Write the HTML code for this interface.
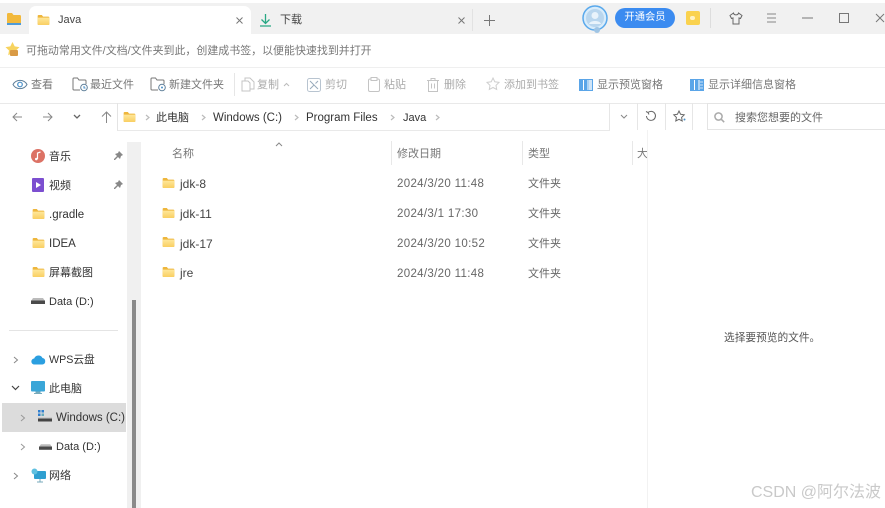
<!DOCTYPE html>
<html lang="zh">
<head>
<meta charset="utf-8">
<style>
html,body{margin:0;padding:0;background:#fff}
body{width:885px;height:508px;overflow:hidden;position:relative;font-family:"Liberation Sans","Noto Sans CJK SC",sans-serif;font-size:11px;color:#333;filter:blur(.3px)}
.t{position:absolute;white-space:nowrap;line-height:14px}
.b{position:absolute}
svg{position:absolute;overflow:visible}
.g{color:#ababab;font-size:11px}
.m{color:#777;font-size:11px}
.f{font-size:12px;color:#444}
.h{color:#777;font-size:11px}
.d{color:#666;font-size:11.500px}
.n{letter-spacing:.33px}
.l{font-size:11.500px}
</style>
</head>
<body>
<svg width="0" height="0" style="position:absolute"><defs>
<linearGradient id="fg" x1="0" y1="0" x2="0" y2="1"><stop offset="0" stop-color="#fee79a"/><stop offset="1" stop-color="#f9cf62"/></linearGradient>
<symbol id="folder" viewBox="0 0 14 12"><path d="M0 1.200C0 .5.500 0 1.200 0H5l1.500 2h6.300c.7 0 1.200.5 1.200 1.200V11c0 .6-.5 1-1.200 1H1.200C.5 12 0 11.600 0 11z" fill="#eeb63c"/><path d="M0 3.200h14V11c0 .6-.5 1-1.200 1H1.200C.5 12 0 11.600 0 11z" fill="url(#fg)"/></symbol>
<symbol id="drive" viewBox="0 0 14 6"><path d="M2 0h10l2 3H0z" fill="#bbb"/><rect y="2.500" width="14" height="3.500" fill="#4a4a4a"/></symbol>
</defs></svg>

<!-- tab strip -->
<div class="b" style="left:0;top:3px;width:885px;height:31px;background:#f1f1f1"></div>
<div class="b" style="left:29px;top:6px;width:222px;height:28px;background:#fff;border-radius:7px 7px 0 0"></div>
<svg style="left:7px;top:13px" width="14" height="12"><path d="M0 1.200C0 .5.500 0 1.200 0H5l1.500 2h6.300c.7 0 1.200.5 1.200 1.200V11c0 .6-.5 1-1.200 1H1.200C.5 12 0 11.600 0 11z" fill="#f2b93c"/><rect y="10" width="14" height="2" fill="#4f9bd8"/></svg>
<svg style="left:37px;top:15px" width="13" height="10"><use href="#folder" width="13" height="10"/></svg>
<div class="t" style="left:58px;top:13px;color:#444">Java</div>
<svg style="left:236px;top:17px" width="7" height="7"><path d="M.5.500l6 6M6.500.500l-6 6" stroke="#777" stroke-width="1"/></svg>
<svg style="left:259px;top:13px" width="13" height="14"><path d="M6.500 1v9M2.500 6.500l4 4 4-4M1 13h11" stroke="#28a884" stroke-width="1.300" fill="none"/></svg>
<div class="t" style="left:280px;top:13px;color:#444">下载</div>
<svg style="left:458px;top:17px" width="7" height="7"><path d="M.5.500l6 6M6.500.500l-6 6" stroke="#777" stroke-width="1"/></svg>
<div class="b" style="left:472px;top:9px;width:1px;height:22px;background:#e2e2e2"></div>
<svg style="left:484px;top:15px" width="11" height="11"><path d="M5.500 0v11M0 5.500h11" stroke="#777" stroke-width="1"/></svg>

<svg style="left:582px;top:5px" width="26" height="28"><circle cx="13" cy="13" r="12" fill="#d8ecfb" stroke="#5aa9ec" stroke-width="1.500"/><circle cx="13" cy="13" r="9" fill="#b9d6ee"/><circle cx="13" cy="10.500" r="3.500" fill="#e9f3fb"/><path d="M7 19c1-4 11-4 12 0z" fill="#e9f3fb"/><circle cx="15" cy="25" r="3" fill="#9fc4e4"/></svg>
<div class="t" style="left:615px;top:8px;width:60px;height:20px;line-height:20px;background:#3b8bf0;color:#fff;border-radius:10px;text-align:center;font-size:10.300px">开通会员</div>
<div class="b" style="left:686px;top:11px;width:14px;height:14px;background:#fad24e;border-radius:2px"></div>
<div class="b" style="left:690px;top:16px;width:5px;height:4px;background:#fff3c4;border-radius:2px"></div>
<div class="b" style="left:710px;top:8px;width:1px;height:20px;background:#ddd"></div>
<svg style="left:729px;top:12px" width="14" height="13"><path d="M4.500 1L1 3.500l1.500 3L4 6v6h6V6l1.500.5 1.500-3L9.500 1C9 3.500 5 3.500 4.500 1z" fill="none" stroke="#666" stroke-width="1"/></svg>
<svg style="left:766px;top:13px" width="11" height="10"><path d="M1 1h9M1 5h9M1 9h9" stroke="#888" stroke-width="1"/></svg>
<svg style="left:802px;top:17px" width="11" height="2"><path d="M0 1h11" stroke="#777" stroke-width="1"/></svg>
<div class="b" style="left:839px;top:13px;width:8px;height:8px;border:1px solid #777"></div>
<svg style="left:875px;top:13px" width="10" height="10"><path d="M1 1l8 8M9 1l-8 8" stroke="#777" stroke-width="1"/></svg>

<!-- bookmark bar -->
<svg style="left:5px;top:42px" width="15" height="15"><path d="M7.500 0l2.200 4.400 4.800.7-3.500 3.400.8 4.800-4.300-2.300-4.300 2.300.8-4.800L.5 5.100l4.800-.7z" fill="#f7d35f"/><rect x="5" y="8" width="8" height="6" rx="1" fill="#d99a45"/></svg>
<div class="t m" style="left:26px;top:44px;font-size:10.960px">可拖动常用文件/文档/文件夹到此，创建成书签，以便能快速找到并打开</div>
<div class="b" style="left:0;top:67px;width:885px;height:1px;background:#efefef"></div>

<!-- toolbar -->
<svg style="left:12px;top:79px" width="16" height="11"><path d="M1 5.500C4 0 12 0 15 5.500 12 11 4 11 1 5.500z" fill="none" stroke="#5f7f99" stroke-width="1"/><circle cx="8" cy="5.500" r="2.300" fill="none" stroke="#4a90c8" stroke-width="1.200"/></svg>
<div class="t m" style="left:31px;top:78px">查看</div>
<svg style="left:72px;top:77px" width="17" height="15"><path d="M8 13H2c-.6 0-1-.4-1-1V2c0-.6.400-1 1-1h3.500l1.500 2h6c.6 0 1 .4 1 1v3" fill="none" stroke="#777" stroke-width="1"/><circle cx="12" cy="10.500" r="3.300" fill="#fff" stroke="#5f7f99"/><path d="M12 9v2h1.500" stroke="#4a90c8" fill="none"/></svg>
<div class="t m" style="left:90px;top:78px">最近文件</div>
<svg style="left:150px;top:77px" width="17" height="15"><path d="M8 13H2c-.6 0-1-.4-1-1V2c0-.6.400-1 1-1h3.500l1.500 2h6c.6 0 1 .4 1 1v3" fill="none" stroke="#777" stroke-width="1"/><circle cx="12" cy="10.500" r="3.300" fill="#fff" stroke="#5f7f99"/><circle cx="12" cy="10.500" r="1" fill="#4a90c8"/></svg>
<div class="t m" style="left:169px;top:78px">新建文件夹</div>
<div class="b" style="left:234px;top:73px;width:1px;height:23px;background:#e6e6e6"></div>
<svg style="left:241px;top:77px" width="14" height="15"><path d="M4 4V1h5l4 4v7H9M1 4h6l2 2v8H1z" fill="none" stroke="#c4c4c4"/></svg>
<div class="t g" style="left:257px;top:78px">复制</div>
<svg style="left:283px;top:82px" width="7" height="5"><path d="M1 4l2.500-2.500L6 4" fill="none" stroke="#bbb"/></svg>
<svg style="left:307px;top:78px" width="14" height="14"><rect x=".5" y=".5" width="13" height="13" rx="2" fill="none" stroke="#b8c4d0"/><path d="M3 3l8 8M3 11l4-4M11 3L8.500 5.500" stroke="#9ab" fill="none"/></svg>
<div class="t g" style="left:325px;top:78px">剪切</div>
<svg style="left:368px;top:77px" width="12" height="15"><rect x=".5" y="2" width="11" height="12.500" rx="1.500" fill="none" stroke="#c4c4c4"/><rect x="3" y=".5" width="6" height="3" fill="#fff" stroke="#c4c4c4"/></svg>
<div class="t g" style="left:384px;top:78px">粘贴</div>
<svg style="left:427px;top:78px" width="12" height="14"><path d="M0 2.500h12M4 2.500V.5h4v2M1.500 2.500v11h9v-11M4.500 5.500v5M7.500 5.500v5" fill="none" stroke="#c4c4c4"/></svg>
<div class="t g" style="left:444px;top:78px">删除</div>
<svg style="left:486px;top:77px" width="14" height="14"><path d="M7 1l1.800 3.800 4.200.6-3 3 .7 4.100L7 10.500l-3.700 2 .7-4.100-3-3 4.200-.6z" fill="none" stroke="#cfcfcf"/></svg>
<div class="t g" style="left:504px;top:78px">添加到书签</div>
<svg style="left:579px;top:79px" width="14" height="12"><rect width="14" height="12" fill="#5aa5e8"/><path d="M4.500 1v10M9 1v10" stroke="#fff"/><rect x="10" y="1" width="3" height="10" fill="#cfe4f7"/></svg>
<div class="t m" style="left:597px;top:78px">显示预览窗格</div>
<svg style="left:690px;top:79px" width="14" height="12"><rect width="14" height="12" fill="#5aa5e8"/><path d="M4.500 1v10M9 1v10" stroke="#fff"/><path d="M10 3h3M10 6h3M10 9h3" stroke="#cfe4f7"/></svg>
<div class="t m" style="left:708px;top:78px">显示详细信息窗格</div>
<div class="b" style="left:0;top:103px;width:885px;height:1px;background:#e9e9e9"></div>

<!-- nav -->
<svg style="left:12px;top:112px" width="11" height="10"><path d="M10 5H1M5 1L1 5l4 4" fill="none" stroke="#888"/></svg>
<svg style="left:42px;top:112px" width="11" height="10"><path d="M1 5h9M6 1l4 4-4 4" fill="none" stroke="#888"/></svg>
<svg style="left:73px;top:114px" width="8" height="6"><path d="M1 1l3 3 3-3" fill="none" stroke="#666" stroke-width="1.300"/></svg>
<svg style="left:101px;top:111px" width="11" height="12"><path d="M5.500 12V1M1 5.500L5.500 1 10 5.500" fill="none" stroke="#888"/></svg>

<!-- address bar -->
<div class="b" style="left:117px;top:103px;width:492px;height:27px;border-left:1px solid #e4e4e4;border-bottom:1px solid #e9e9e9"></div>
<svg style="left:123px;top:112px" width="13" height="10"><use href="#folder" width="13" height="10"/></svg>
<svg style="left:145px;top:114px" width="5" height="7"><path d="M1 1l3 2.500L1 6" fill="none" stroke="#bbb" stroke-width="1.200"/></svg>
<div class="t" style="left:156px;top:111px;color:#333">此电脑</div>
<svg style="left:201px;top:114px" width="5" height="7"><path d="M1 1l3 2.500L1 6" fill="none" stroke="#bbb" stroke-width="1.200"/></svg>
<div class="t l" style="left:213px;top:111px;color:#333">Windows (C:)</div>
<svg style="left:294px;top:114px" width="5" height="7"><path d="M1 1l3 2.500L1 6" fill="none" stroke="#bbb" stroke-width="1.200"/></svg>
<div class="t l" style="left:306px;top:111px;color:#333">Program Files</div>
<svg style="left:390px;top:114px" width="5" height="7"><path d="M1 1l3 2.500L1 6" fill="none" stroke="#bbb" stroke-width="1.200"/></svg>
<div class="t" style="left:403px;top:111px;color:#333">Java</div>
<svg style="left:435px;top:114px" width="5" height="7"><path d="M1 1l3 2.500L1 6" fill="none" stroke="#bbb" stroke-width="1.200"/></svg>

<div class="b" style="left:609px;top:103px;width:1px;height:27px;background:#e6e6e6"></div>
<svg style="left:620px;top:114px" width="8" height="6"><path d="M1 1l3 3 3-3" fill="none" stroke="#888"/></svg>
<div class="b" style="left:637px;top:103px;width:1px;height:27px;background:#e6e6e6"></div>
<svg style="left:645px;top:110px" width="12" height="12"><path d="M3 2.500A4.500 4.500 0 1 1 1.500 6M1 1.500l2 1 1 2" fill="none" stroke="#666"/></svg>
<div class="b" style="left:665px;top:103px;width:1px;height:27px;background:#e6e6e6"></div>
<svg style="left:673px;top:110px" width="14" height="13"><path d="M6 1l1.600 3.300 3.600.5-2.600 2.600.6 3.600L6 9.300 2.800 11l.6-3.600L.8 4.800l3.600-.5z" fill="none" stroke="#666"/><circle cx="11.500" cy="9.500" r="1" fill="#4a90c8"/></svg>
<div class="b" style="left:692px;top:103px;width:1px;height:27px;background:#e6e6e6"></div>
<div class="b" style="left:707px;top:103px;width:178px;height:27px;border:1px solid #e4e4e4;border-right:0;box-sizing:border-box"></div>
<svg style="left:714px;top:112px" width="11" height="11"><circle cx="4.500" cy="4.500" r="3.600" fill="none" stroke="#aaa" stroke-width="1.500"/><path d="M7.200 7.200l3 3" stroke="#aaa" stroke-width="1.500"/></svg>
<div class="t m" style="left:735px;top:111px;color:#666">搜索您想要的文件</div>

<!-- sidebar -->
<div class="b" style="left:127px;top:142px;width:14px;height:366px;background:#f0f0f0"></div>
<div class="b" style="left:132px;top:300px;width:4px;height:208px;background:#8a8a8a"></div>

<svg style="left:31px;top:149px" width="14" height="14"><circle cx="7" cy="7" r="7" fill="#dc7265"/><path d="M6.500 10V4l3-1" fill="none" stroke="#fff" stroke-width="1.200"/><circle cx="5.300" cy="10" r="1.300" fill="#fff"/></svg>
<div class="t" style="left:49px;top:150px">音乐</div>
<svg style="left:113px;top:151px" width="10" height="10"><path d="M6 0l4 4-2 1-1 3-2-2-3 3-1 0 0-1 3-3-2-2 3-1z" fill="#888"/></svg>
<svg style="left:32px;top:178px" width="12" height="14"><rect width="12" height="14" rx="1" fill="#7c4fd0"/><path d="M4 4l5 3-5 3z" fill="#fff"/></svg>
<div class="t" style="left:49px;top:179px">视频</div>
<svg style="left:113px;top:180px" width="10" height="10"><path d="M6 0l4 4-2 1-1 3-2-2-3 3-1 0 0-1 3-3-2-2 3-1z" fill="#888"/></svg>
<svg style="left:32px;top:209px" width="13" height="10"><use href="#folder" width="13" height="10"/></svg>
<div class="t l" style="left:49px;top:208px">.gradle</div>
<svg style="left:32px;top:238px" width="13" height="10"><use href="#folder" width="13" height="10"/></svg>
<div class="t l" style="left:49px;top:237px">IDEA</div>
<svg style="left:32px;top:267px" width="13" height="10"><use href="#folder" width="13" height="10"/></svg>
<div class="t" style="left:49px;top:266px">屏幕截图</div>
<svg style="left:31px;top:298px" width="14" height="6"><use href="#drive" width="14" height="6"/></svg>
<div class="t" style="left:49px;top:295px">Data (D:)</div>

<div class="b" style="left:9px;top:330px;width:109px;height:1px;background:#e4e4e4"></div>

<svg style="left:13px;top:356px" width="6" height="8"><path d="M1 1l3.500 3L1 7" fill="none" stroke="#888"/></svg>
<svg style="left:31px;top:353px" width="15" height="12"><path d="M3.500 11.500a3 3 0 0 1-.3-6A4.500 4.500 0 0 1 11.500 5a3.300 3.300 0 0 1 0 6.500z" fill="#2b9fe0"/></svg>
<div class="t" style="left:49px;top:353px;font-size:10.700px">WPS云盘</div>
<svg style="left:11px;top:385px" width="9" height="6"><path d="M1 1l3.500 3.500L8 1" fill="none" stroke="#444" stroke-width="1.200"/></svg>
<svg style="left:31px;top:381px" width="14" height="14"><rect width="14" height="10.500" rx="1" fill="#3aa6d8"/><rect x="4.500" y="10.500" width="5" height="1.500" fill="#7ab"/><rect x="3" y="12" width="8" height="1" fill="#7ab"/></svg>
<div class="t" style="left:49px;top:382px">此电脑</div>
<div class="b" style="left:2px;top:403px;width:124px;height:29px;background:#dcdcdc"></div>
<svg style="left:20px;top:414px" width="6" height="8"><path d="M1 1l3.500 3L1 7" fill="none" stroke="#999"/></svg>
<svg style="left:38px;top:410px" width="14" height="13"><rect width="2.500" height="2.500" fill="#2f7fd0"/><rect x="3.500" width="2.500" height="2.500" fill="#2f7fd0"/><rect y="3.500" width="2.500" height="2.500" fill="#2f7fd0"/><rect x="3.500" y="3.500" width="2.500" height="2.500" fill="#6ab"/><rect y="7" width="14" height="2" fill="#ccc"/><rect y="8.500" width="14" height="3" fill="#444"/></svg>
<div class="t l" style="left:56px;top:411px">Windows (C:)</div>
<svg style="left:20px;top:443px" width="6" height="8"><path d="M1 1l3.500 3L1 7" fill="none" stroke="#999"/></svg>
<svg style="left:39px;top:444px" width="13" height="6"><use href="#drive" width="13" height="6"/></svg>
<div class="t" style="left:56px;top:440px">Data (D:)</div>
<svg style="left:13px;top:472px" width="6" height="8"><path d="M1 1l3.500 3L1 7" fill="none" stroke="#888"/></svg>
<svg style="left:31px;top:468px" width="15" height="15"><rect x="3" y="3" width="12" height="8" rx="1" fill="#2f9fd0"/><circle cx="3.500" cy="3.500" r="3" fill="#5fc0e0"/><path d="M9 11v3M6 14h6" stroke="#7ab"/></svg>
<div class="t" style="left:49px;top:469px">网络</div>

<!-- file list -->
<svg style="left:275px;top:142px" width="8" height="5"><path d="M1 4l3-3 3 3" fill="none" stroke="#888"/></svg>
<div class="t h" style="left:172px;top:147px">名称</div>
<div class="b" style="left:391px;top:141px;width:1px;height:24px;background:#e8e8e8"></div>
<div class="t h" style="left:397px;top:147px">修改日期</div>
<div class="b" style="left:522px;top:141px;width:1px;height:24px;background:#e8e8e8"></div>
<div class="t h" style="left:528px;top:147px">类型</div>
<div class="b" style="left:632px;top:141px;width:1px;height:24px;background:#e8e8e8"></div>
<div class="t h" style="left:637px;top:147px">大</div>
<div class="b" style="left:647px;top:130px;width:1px;height:378px;background:#f2f2f2"></div>

<svg style="left:162px;top:178px" width="13" height="10"><use href="#folder" width="13" height="10"/></svg>
<div class="t f" style="left:180px;top:177px">jdk-8</div>
<div class="t d n" style="left:397px;top:177px">2024/3/20 11:48</div>
<div class="t d" style="left:528px;top:177px;font-size:11px">文件夹</div>

<svg style="left:162px;top:208px" width="13" height="10"><use href="#folder" width="13" height="10"/></svg>
<div class="t f" style="left:180px;top:207px">jdk-11</div>
<div class="t d n" style="left:397px;top:207px">2024/3/1 17:30</div>
<div class="t d" style="left:528px;top:207px;font-size:11px">文件夹</div>

<svg style="left:162px;top:237px" width="13" height="10"><use href="#folder" width="13" height="10"/></svg>
<div class="t f" style="left:180px;top:237px">jdk-17</div>
<div class="t d n" style="left:397px;top:237px">2024/3/20 10:52</div>
<div class="t d" style="left:528px;top:237px;font-size:11px">文件夹</div>

<svg style="left:162px;top:267px" width="13" height="10"><use href="#folder" width="13" height="10"/></svg>
<div class="t f" style="left:180px;top:266px">jre</div>
<div class="t d n" style="left:397px;top:267px">2024/3/20 11:48</div>
<div class="t d" style="left:528px;top:267px;font-size:11px">文件夹</div>

<div class="t" style="left:724px;top:331px;color:#555;font-size:10.700px">选择要预览的文件。</div>
<div class="t" style="left:751px;top:484px;font-size:16px;line-height:18px;color:#c9c9c9">CSDN @阿尔法波</div>
</body>
</html>
